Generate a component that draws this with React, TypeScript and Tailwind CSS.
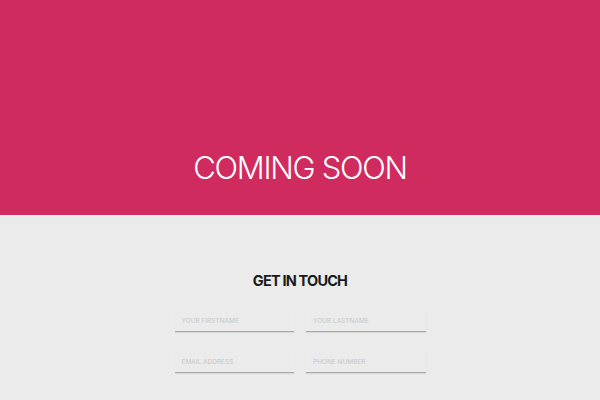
export default function App() {
  return (
    <div className="min-h-screen w-full bg-[#ebebeb] font-['Inter',sans-serif]">
      {/* Hero */}
      <div className="flex h-[215px] flex-col items-center justify-end bg-[#d02b5e] pb-[27px]">
        <h1 className="text-[31px] font-light leading-[40px] tracking-[-1.3px] text-white">COMING SOON</h1>
      </div>

      {/* Contact */}
      <div className="flex flex-col items-center pt-[56px]">
        <h2 className="text-[14.5px] font-bold leading-[20px] tracking-[-0.8px] text-[#1a1a1a]">GET IN TOUCH</h2>
        <form className="mt-[19px] grid w-[251px] grid-cols-2 gap-x-[12px] gap-y-[19px]">
          <Field placeholder="Your Firstname" />
          <Field placeholder="Your Lastname" />
          <Field placeholder="Email Address" />
          <Field placeholder="Phone Number" />
        </form>
      </div>
    </div>
  );
}

function Field({ placeholder }: { placeholder: string }) {
  return (
    <input
      type="text"
      placeholder={placeholder.toUpperCase()}
      className="h-[22px] w-full border-b border-[#a9a9a9] bg-transparent pl-[7px] text-[6.5px] uppercase outline-none placeholder:text-[#c6c6c6] shadow-[0_1px_1px_rgba(0,0,0,0.08)]"
    />
  );
}
